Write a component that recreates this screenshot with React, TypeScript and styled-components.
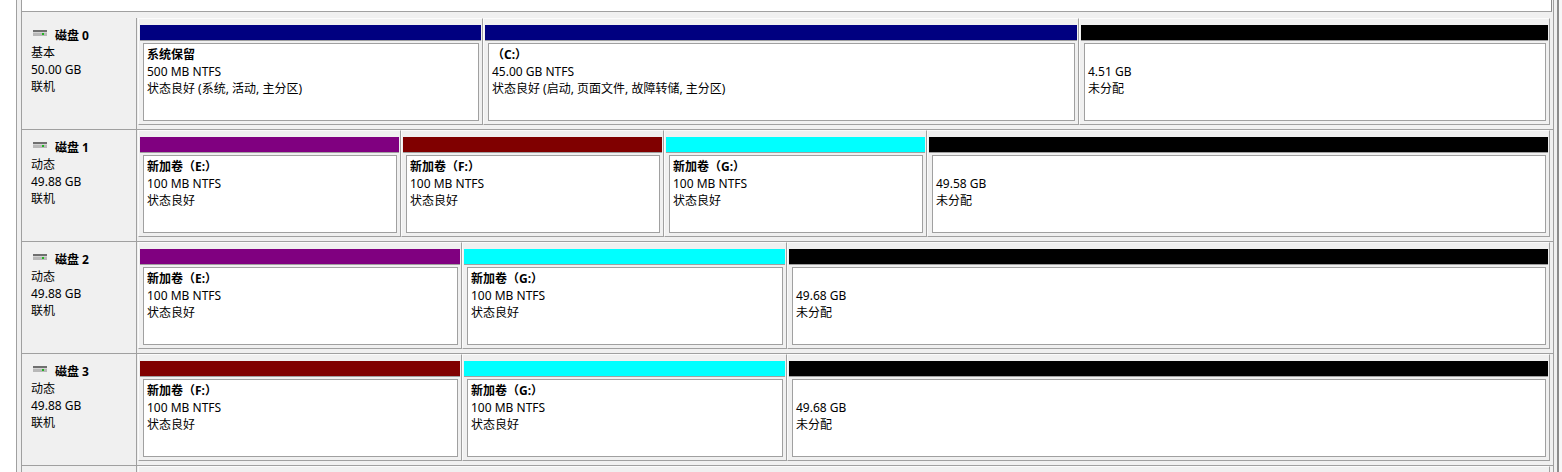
import React from "react";
import styled, { createGlobalStyle } from "styled-components";

const Global = createGlobalStyle`
  html, body { margin: 0; padding: 0; background: #fff; overflow: hidden; }
  body {
    font-family: "Noto Sans", "Noto Sans CJK SC", sans-serif;
    font-size: 12px;
    color: #000;
  }
`;

const Root = styled.div`
  display: flex;
  height: 472px;
  overflow: hidden;
  padding-left: 16px;
  background: #fff;
`;

const Frame = styled.div`
  flex: 1;
  display: flex;
  border-left: 1px solid #a0a0a0;
  padding-left: 4px;
  background: #f0f0f0;
`;

const Pane = styled.div`
  width: 1531px;
  flex: none;
  display: flex;
  flex-direction: column;
  border-left: 1px solid #a0a0a0;
  border-right: 1px solid #a0a0a0;
  background: #f0f0f0;
`;

const TopList = styled.div`
  height: 11px;
  flex: none;
  margin-right: 1px;
  background: #fff;
  border-bottom: 1px solid #a0a0a0;
  border-right: 1px solid #8a8a8a;
  margin-bottom: 6px;
`;

const EdgeStrip = styled.div`
  width: 3px;
  flex: none;
  margin-left: 3px;
  border-left: 2px solid #8c8c8c;
  background: #f7f7f7;
`;

const Row = styled.div`
  display: flex;
  flex: none;
  height: 111px;
  border-bottom: 1px solid #a0a0a0;
`;

const Label = styled.div`
  width: 115px;
  flex: none;
  box-sizing: border-box;
  border-right: 1px solid #a0a0a0;
  padding: 9px 0 0 9px;
  line-height: 17px;
  white-space: nowrap;
`;

const TitleLine = styled.div`
  display: flex;
  align-items: flex-start;
  height: 17px;
  font-weight: bold;
`;

const IconBox = styled.svg`
  flex: none;
  margin: 3px 8px 0 2px;
`;

const Parts = styled.div`
  flex: 1;
  display: flex;
  align-items: flex-start;
  padding-left: 1px;
`;

const Cell = styled.div<{ $w: number }>`
  width: ${(p) => p.$w}px;
  flex: none;
  box-sizing: border-box;
  height: 107px;
  border-top: 1px solid #fbfbfb;
  border-left: 1px solid #fbfbfb;
  border-right: 1px solid #a0a0a0;
  border-bottom: 1px solid #a0a0a0;
  padding: 6px 1px 0 1px;
  display: flex;
  flex-direction: column;
`;

const Bar = styled.div<{ $c: string }>`
  height: 15px;
  flex: none;
  background: ${(p) => p.$c};
`;

const Body = styled.div`
  flex: 1;
  border-top: 1px solid #a0a0a0;
  padding: 2px 2px 3px 3px;
  display: flex;
`;

const Inner = styled.div`
  flex: 1;
  box-sizing: border-box;
  height: 78px;
  border: 1px solid #a0a0a0;
  background: #fff;
  padding: 2px 0 0 3px;
  line-height: 17px;
  white-space: nowrap;
  overflow: hidden;
`;

const Name = styled.div`
  font-weight: bold;
  height: 17px;
`;

const Line = styled.div`
  height: 17px;
`;

type Part = { w: number; c: string; t: string; a: string; b: string };
type Disk = { n: string; k: string; s: string; parts: Part[] };

const NAVY = "#000080";
const PURPLE = "#800080";
const DRED = "#800000";
const CYAN = "#00ffff";
const BLACK = "#000000";

const disks: Disk[] = [
  {
    n: "磁盘 0",
    k: "基本",
    s: "50.00 GB",
    parts: [
      { w: 345, c: NAVY, t: "系统保留", a: "500 MB NTFS", b: "状态良好 (系统, 活动, 主分区)" },
      { w: 596, c: NAVY, t: "（C:）", a: "45.00 GB NTFS", b: "状态良好 (启动, 页面文件, 故障转储, 主分区)" },
      { w: 471, c: BLACK, t: "", a: "4.51 GB", b: "未分配" },
    ],
  },
  {
    n: "磁盘 1",
    k: "动态",
    s: "49.88 GB",
    parts: [
      { w: 263, c: PURPLE, t: "新加卷（E:）", a: "100 MB NTFS", b: "状态良好" },
      { w: 263, c: DRED, t: "新加卷（F:）", a: "100 MB NTFS", b: "状态良好" },
      { w: 263, c: CYAN, t: "新加卷（G:）", a: "100 MB NTFS", b: "状态良好" },
      { w: 623, c: BLACK, t: "", a: "49.58 GB", b: "未分配" },
    ],
  },
  {
    n: "磁盘 2",
    k: "动态",
    s: "49.88 GB",
    parts: [
      { w: 324, c: PURPLE, t: "新加卷（E:）", a: "100 MB NTFS", b: "状态良好" },
      { w: 325, c: CYAN, t: "新加卷（G:）", a: "100 MB NTFS", b: "状态良好" },
      { w: 763, c: BLACK, t: "", a: "49.68 GB", b: "未分配" },
    ],
  },
  {
    n: "磁盘 3",
    k: "动态",
    s: "49.88 GB",
    parts: [
      { w: 324, c: DRED, t: "新加卷（F:）", a: "100 MB NTFS", b: "状态良好" },
      { w: 325, c: CYAN, t: "新加卷（G:）", a: "100 MB NTFS", b: "状态良好" },
      { w: 763, c: BLACK, t: "", a: "49.68 GB", b: "未分配" },
    ],
  },
];

const DiskIcon = () => (
  <IconBox width="14" height="6" viewBox="0 0 14 6">
    <rect x="0" y="0" width="14" height="2" fill="#6f6f6f" />
    <rect x="0" y="2" width="14" height="4" fill="#b8b8b8" />
    <rect x="0" y="2" width="14" height="1" fill="#d4d4d4" />
    <rect x="9" y="3" width="2" height="2" fill="#22b322" />
  </IconBox>
);

export default function App() {
  return (
    <>
      <Global />
      <Root>
        <Frame>
          <Pane>
            <TopList />
            {disks.map((d) => (
              <Row key={d.n}>
                <Label>
                  <TitleLine>
                    <DiskIcon />
                    {d.n}
                  </TitleLine>
                  <Line>{d.k}</Line>
                  <Line>{d.s}</Line>
                  <Line>联机</Line>
                </Label>
                <Parts>
                  {d.parts.map((p, i) => (
                    <Cell key={i} $w={p.w}>
                      <Bar $c={p.c} />
                      <Body>
                        <Inner>
                          <Name>{p.t || "\u00a0"}</Name>
                          <Line>{p.a}</Line>
                          <Line>{p.b}</Line>
                        </Inner>
                      </Body>
                    </Cell>
                  ))}
                </Parts>
              </Row>
            ))}
            <Row>
              <Label />
              <Parts>
                <Cell $w={1412} />
              </Parts>
            </Row>
          </Pane>
          <EdgeStrip />
        </Frame>
      </Root>
    </>
  );
}
